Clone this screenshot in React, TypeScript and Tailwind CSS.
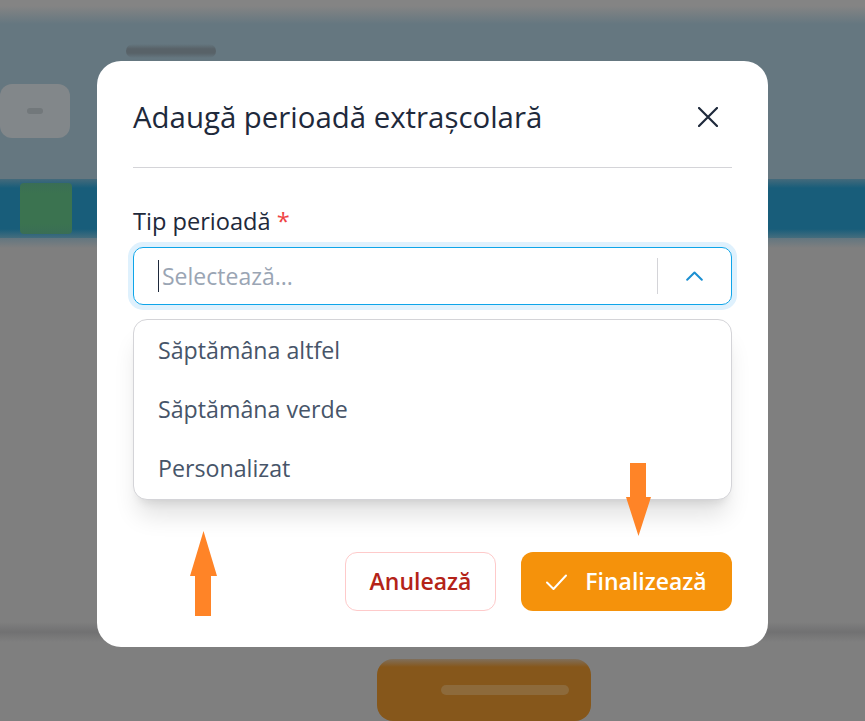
import React from "react";

function UpArrow() {
  return (
    <svg width="27" height="85" viewBox="0 0 27 85" className="absolute left-[190px] top-[531px]">
      <path d="M13.5 0 L27 45 L21 45 L21 85 L5 85 L5 45 L0 45 Z" fill="#ff8427" />
    </svg>
  );
}

function DownArrow() {
  return (
    <svg width="25" height="73" viewBox="0 0 25 73" className="absolute left-[626px] top-[463px]">
      <path d="M4 0 L20 0 L20 34 L25 34 L12.5 73 L0 34 L4 34 Z" fill="#ff8427" />
    </svg>
  );
}

export default function App() {
  return (
    <div className="relative h-[721px] w-[865px] overflow-hidden bg-[#7f7f7f] font-['Open_Sans','Lato',sans-serif]">
      {/* dimmed, out-of-focus page behind the dialog */}
      <div className="flex h-full flex-col">
        <div className="flex h-[182px] flex-col bg-[linear-gradient(to_bottom,#848484_0px,#848484_6px,#657780_24px,#657780_100%)]">
          <div className="ml-[126px] mt-[44px] h-[14px] w-[90px] rounded-full bg-[linear-gradient(to_bottom,#657780_0%,#586268_35%,#586268_65%,#657780_100%)]" />
          <div className="ml-[0px] mt-[26px] flex h-[54px] w-[70px] items-center justify-center rounded-xl bg-[#82878a]">
            <div className="h-[6px] w-[16px] rounded-full bg-[#72787b]" />
          </div>
        </div>
        <div className="flex h-[60px] bg-[linear-gradient(to_bottom,#446a7b_0px,#185d7a_9px,#185d7a_50px,#4a6f7e_60px)]">
          <div className="my-[4px] ml-[20px] w-[52px] rounded bg-[linear-gradient(to_bottom,#3a6e55_0%,#3b7350_20%,#3b7350_80%,#3a6e55_100%)]" />
        </div>
        <div className="h-[390px] bg-[linear-gradient(to_bottom,#627680_0px,#7f7f7f_10px,#7f7f7f_100%)]" />
        <div className="h-[20px] bg-[linear-gradient(to_bottom,#7f7f7f_0px,#717172_10px,#7f7f7f_20px)]" />
        <div className="flex-1 bg-[#7f7f7f] pt-[17px]">
          <div className="ml-[377px] flex h-[62px] w-[214px] items-center rounded-2xl bg-[linear-gradient(to_bottom,#7f6f5c_0px,#86571b_8px,#86571b_100%)] pl-[64px]">
            <div className="h-[10px] w-[128px] rounded-full bg-[#8d6a3b]" />
          </div>
        </div>
      </div>

      {/* dialog layer */}
      <div className="absolute inset-0 flex justify-center pt-[61px]">
        <div className="flex h-[586px] w-[671px] flex-col rounded-[24px] bg-white px-[36px] pb-[36px] pt-[36px]">
          <div className="flex h-[40px] items-center justify-between">
            <h2 className="text-[29.4px] leading-[40px] text-[#1e293b]">Adaugă perioadă extrașcolară</h2>
            <svg width="20" height="20" viewBox="0 0 20 20" className="mr-[14px]">
              <path d="M1 1 L19 19 M19 1 L1 19" stroke="#1e293b" strokeWidth="2.2" strokeLinecap="round" />
            </svg>
          </div>
          <div className="mt-[30px] border-t border-[#d4d4d8]" />

          <div className="relative mt-[37px]">
            <label className="block text-[23.6px] leading-[32px] text-[#1e293b]">
              Tip perioadă <span className="text-[#ef4444]">*</span>
            </label>
            <div className="mt-[10px] flex h-[58px] items-center rounded-[10px] border border-[#0ea5e9] ring-[5px] ring-[#dff1fd]">
              <div className="flex flex-1 items-center pl-[24px]">
                <span className="mr-[3px] h-[32px] w-[1px] bg-[#1e293b]" />
                <span className="text-[23px] text-[#9aa5b4]">Selectează...</span>
              </div>
              <div className="h-[36px] w-[1px] bg-[#d4d4d8]" />
              <div className="flex w-[73px] items-center justify-center">
                <svg width="17" height="10" viewBox="0 0 17 10">
                  <path d="M1.2 8.8 L8.5 1.5 L15.8 8.8" stroke="#1b8fd1" strokeWidth="2" fill="none" strokeLinecap="round" strokeLinejoin="round" />
                </svg>
              </div>
            </div>
            <div className="absolute left-0 right-0 top-[114px] rounded-[14px] border border-[#d4d4d8] bg-white py-[1px] shadow-[0_20px_25px_-5px_rgba(0,0,0,0.12),0_8px_10px_-6px_rgba(0,0,0,0.1)]">
              {["Săptămâna altfel", "Săptămâna verde", "Personalizat"].map((t) => (
                <div key={t} className="flex h-[59px] items-center px-[24px] text-[23.2px] text-[#475569]">
                  {t}
                </div>
              ))}
            </div>
          </div>

          <div className="mt-auto flex justify-end gap-[25px]">
            <button className="h-[59px] w-[151px] rounded-[12px] border border-[#fecaca] bg-white text-[23px] font-semibold text-[#b42318]">
              Anulează
            </button>
            <button className="flex h-[59px] w-[211px] items-center justify-center gap-[18px] rounded-[12px] bg-[#f5920b] text-[23px] font-semibold text-white">
              <svg width="21" height="16" viewBox="0 0 21 16">
                <path d="M1 8.5 L7.5 15 L20 1.5" stroke="white" strokeWidth="2" fill="none" strokeLinecap="round" strokeLinejoin="round" />
              </svg>
              Finalizează
            </button>
          </div>
        </div>
      </div>

      <UpArrow />
      <DownArrow />
    </div>
  );
}
